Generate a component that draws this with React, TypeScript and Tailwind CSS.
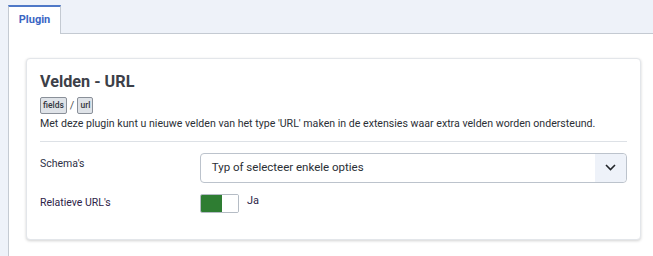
export default function App() {
  return (
    <div className="h-[256px] w-[653px] overflow-hidden bg-[#eef2f9] pt-[5px] pl-[8px] font-['Roboto',sans-serif] text-[#22262a]">
      <div className="flex">
        <div className="z-10 -mb-px flex h-[29px] w-[53px] items-center justify-center border-x border-t-[2px] border-x-[#c4cad2] border-t-[#4f78c7] bg-white text-[11px] font-bold text-[#3a66c4]">
          Plugin
        </div>
      </div>
      <div className="h-[240px] w-[700px] border-l border-t border-[#c4cad2] bg-white pt-[24px] pl-[17px]">
        <div className="w-[615px] rounded-[4px] border border-[#e3e6ea] bg-white px-[13px] pt-[11px] pb-[26px] shadow-[0_1px_3px_rgba(0,0,0,0.18)]">
          <h1 className="text-[16.2px] font-bold leading-[24px] text-[#3c4048]">Velden - URL</h1>
          <div className="mt-[3px] flex items-center gap-[3px] text-[8.5px] leading-none">
            <span className="rounded-[2px] border border-[#8a9099] bg-[#dfe3e8] px-[2px] py-[3px] font-medium text-[#33373d]">fields</span>
            <span className="text-[11px] text-[#555]">/</span>
            <span className="rounded-[2px] border border-[#8a9099] bg-[#dfe3e8] px-[2px] py-[3px] font-medium text-[#33373d]">url</span>
          </div>
          <p className="mt-[1px] text-[10.6px] leading-[18px] text-[#2b2f36]">
            Met deze plugin kunt u nieuwe velden van het type 'URL' maken in de extensies waar extra velden worden ondersteund.
          </p>
          <div className="mt-[8px] border-t border-[#dde1e6]" />
          <div className="mt-[11px] flex">
            <div className="w-[160px] pt-[3px] text-[10.5px] leading-[16px] text-[#2d2f45]">Schema's</div>
            <div className="flex h-[30px] w-[428px] items-center justify-between rounded-[4px] border border-[#bcc3cc] bg-white">
              <span className="pl-[11px] text-[11.5px] text-[#2b2f36]">Typ of selecteer enkele opties</span>
              <span className="flex h-full w-[31px] items-center justify-center rounded-r-[4px] bg-[#eef2f9]">
                <svg width="11" height="7" viewBox="0 0 11 7" fill="none">
                  <path d="M1 1l4.5 4.5L10 1" stroke="#22262a" strokeWidth="1.6" />
                </svg>
              </span>
            </div>
          </div>
          <div className="mt-[11px] flex items-center">
            <div className="w-[160px] text-[10.5px] leading-[16px] text-[#2d2348]">Relatieve URL's</div>
            <div className="flex h-[19px] w-[39px] overflow-hidden rounded-[2px] border border-[#b5bcc5]">
              <span className="w-[21px] bg-[#2e7d32]" />
              <span className="flex-1 bg-white" />
            </div>
            <span className="ml-[8px] -mt-[4px] text-[11px] text-[#2d2348]">Ja</span>
          </div>
        </div>
      </div>
    </div>
  );
}
